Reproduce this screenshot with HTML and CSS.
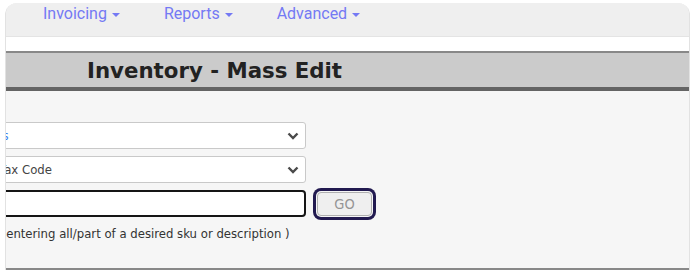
FILE: index.html
```html
<!DOCTYPE html>
<html lang="en">
<head>
  <meta charset="UTF-8">
  <title>Inventory - Mass Edit</title>
  <link rel="stylesheet" href="styles.css">
</head>
<body>
  <div class="panel">
    <!-- top menu -->
    <nav class="topnav">
      <a href="#">Invoicing <span class="caret"></span></a>
      <a href="#">Reports <span class="caret"></span></a>
      <a href="#">Advanced <span class="caret"></span></a>
    </nav>
    <div class="spacer"></div>

    <div class="title-bar">
      <h1>Inventory - Mass Edit</h1>
    </div>

    <div class="content">
      <form class="mass-form">
        <div class="select-wrap">
          <select class="field field-blue"><option>Is</option></select>
          <svg class="chevron" viewBox="0 0 12 8" width="12" height="8"><path d="M1.5 1.5 L6 6 L10.5 1.5" fill="none" stroke="#4a4a4a" stroke-width="2.4"/></svg>
        </div>
        <div class="select-wrap">
          <select class="field"><option>Tax Code</option></select>
          <svg class="chevron" viewBox="0 0 12 8" width="12" height="8"><path d="M1.5 1.5 L6 6 L10.5 1.5" fill="none" stroke="#4a4a4a" stroke-width="2.4"/></svg>
        </div>
        <div class="search-row">
          <input type="text" class="search">
          <button type="button" class="go">GO</button>
        </div>
        <p class="hint">( Search by entering all/part of a desired sku or description )</p>
      </form>
    </div>
  </div>
</body>
</html>
```

FILE: styles.css
```css
* {
  margin: 0;
  padding: 0;
  box-sizing: border-box;
}

body {
  background: #fff;
  font-family: "DejaVu Sans", sans-serif;
  color: #333;
}

/* outer panel */
.panel {
  margin: 3px 0 0 5px;
  width: 685px;
  border-left: 1px solid #e2e2e2;
  border-right: 1px solid #e2e2e2;
  border-radius: 12px 12px 0 0;
  overflow: hidden;
  background: #f6f6f6;
}

/* top menu */
.topnav {
  display: flex;
  gap: 44px;
  height: 34px;
  padding: 1px 0 0 37px;
  background: #efefef;
  border-bottom: 1px solid #e4e4e4;
}
.topnav a {
  font-family: Roboto, sans-serif;
  font-size: 16px;
  line-height: 20px;
  color: #7479f4;
  text-decoration: none;
}
.caret {
  display: inline-block;
  width: 0;
  height: 0;
  margin-left: 1px;
  vertical-align: middle;
  border-top: 4px solid #7479f4;
  border-left: 4px solid transparent;
  border-right: 4px solid transparent;
}

.spacer {
  height: 14px;
  background: #fff;
}

/* title bar */
.title-bar {
  height: 40px;
  background: #cbcbcb;
  border-top: 2px solid #888;
  border-bottom: 4px solid #646464;
  display: flex;
  align-items: center;
  padding-left: 81px;
}
.title-bar h1 {
  font-family: "DejaVu Sans", sans-serif;
  font-weight: bold;
  font-size: 21.3px;
  color: #222;
}

/* form area */
.content {
  height: 179px;
  padding-top: 31px;
  border-bottom: 2px solid #888;
}
.mass-form {
  margin-left: -12px;
  width: 400px;
}
.select-wrap {
  position: relative;
  width: 312px;
  margin-bottom: 7px;
}
.field {
  appearance: none;
  display: block;
  width: 312px;
  height: 27px;
  padding: 0 4px;
  border: 1px solid #c9c9c9;
  border-radius: 3px;
  background: #fff;
  font-family: "DejaVu Sans", sans-serif;
  font-size: 11.7px;
  color: #444;
}
.field-blue {
  color: #3b82f0;
}
.chevron {
  position: absolute;
  right: 7px;
  top: 10px;
}

.search-row {
  display: flex;
  align-items: center;
}
.search {
  width: 312px;
  height: 27px;
  border: 2px solid #151515;
  border-radius: 4px;
  background: #fff;
}
.go {
  width: 55px;
  height: 24px;
  margin-left: 11px;
  border: 1px solid #b0b0b0;
  border-radius: 4px;
  background: #efefef;
  color: #959595;
  font-family: "DejaVu Sans Condensed", "DejaVu Sans", sans-serif;
  font-size: 14.5px;
  box-shadow: 0 0 0 1px #f6f6f6, 0 0 0 4px #221a50;
}
.hint {
  margin: 10px 0 0 -58px;
  font-size: 11.7px;
  color: #333;
  white-space: nowrap;
}
```
